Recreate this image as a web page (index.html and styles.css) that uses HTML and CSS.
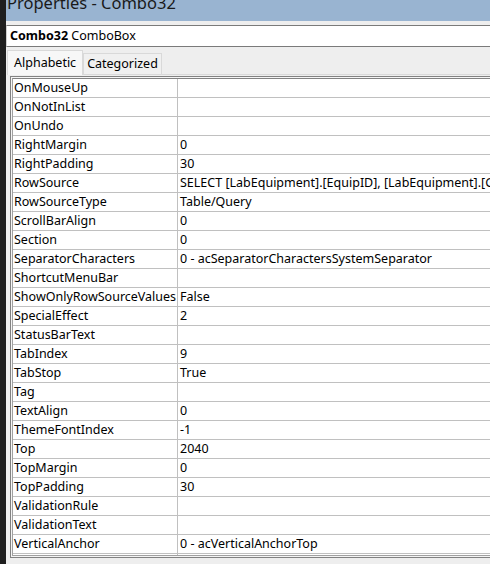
FILE: index.html
```html
<!DOCTYPE html>
<html>
<head>
<meta charset="utf-8">
<link rel="stylesheet" href="styles.css">
</head>
<body>
<div class="desk">
  <div class="strip"></div>
  <div class="win">
    <div class="titlebar"><span class="title">Properties - Combo32</span></div>
    <div class="gap"></div>
    <div class="selector"><b>Combo32</b> ComboBox</div>
    <div class="panel">
      <div class="tabs">
        <div class="tab active">Alphabetic</div>
        <div class="tab">Categorized</div>
      </div>
      <div class="grid">
        <div class="inner">
          <div class="row"><div class="k">OnMouseUp</div><div class="v"></div></div>
          <div class="row"><div class="k">OnNotInList</div><div class="v"></div></div>
          <div class="row"><div class="k">OnUndo</div><div class="v"></div></div>
          <div class="row"><div class="k">RightMargin</div><div class="v">0</div></div>
          <div class="row"><div class="k">RightPadding</div><div class="v">30</div></div>
          <div class="row"><div class="k">RowSource</div><div class="v">SELECT [LabEquipment].[EquipID], [LabEquipment].[GroupID] FROM [LabEquipment];</div></div>
          <div class="row"><div class="k">RowSourceType</div><div class="v">Table/Query</div></div>
          <div class="row"><div class="k">ScrollBarAlign</div><div class="v">0</div></div>
          <div class="row"><div class="k">Section</div><div class="v">0</div></div>
          <div class="row"><div class="k">SeparatorCharacters</div><div class="v">0 - acSeparatorCharactersSystemSeparator</div></div>
          <div class="row"><div class="k">ShortcutMenuBar</div><div class="v"></div></div>
          <div class="row"><div class="k">ShowOnlyRowSourceValues</div><div class="v">False</div></div>
          <div class="row"><div class="k">SpecialEffect</div><div class="v">2</div></div>
          <div class="row"><div class="k">StatusBarText</div><div class="v"></div></div>
          <div class="row"><div class="k">TabIndex</div><div class="v">9</div></div>
          <div class="row"><div class="k">TabStop</div><div class="v">True</div></div>
          <div class="row"><div class="k">Tag</div><div class="v"></div></div>
          <div class="row"><div class="k">TextAlign</div><div class="v">0</div></div>
          <div class="row"><div class="k">ThemeFontIndex</div><div class="v">-1</div></div>
          <div class="row"><div class="k">Top</div><div class="v">2040</div></div>
          <div class="row"><div class="k">TopMargin</div><div class="v">0</div></div>
          <div class="row"><div class="k">TopPadding</div><div class="v">30</div></div>
          <div class="row"><div class="k">ValidationRule</div><div class="v"></div></div>
          <div class="row"><div class="k">ValidationText</div><div class="v"></div></div>
          <div class="row"><div class="k">VerticalAnchor</div><div class="v">0 - acVerticalAnchorTop</div></div>
          <div class="row"><div class="k">Visible</div><div class="v">True</div></div>
        </div>
      </div>
    </div>
  </div>
</div>
</body>
</html>
```
FILE: styles.css
```css
html, body {
  margin: 0;
  padding: 0;
  width: 490px;
  height: 564px;
  overflow: hidden;
  background: #eeeeee;
}
body {
  font-family: "Noto Sans", "Open Sans", sans-serif;
  font-size: 12.5px;
  color: #000;
}
.desk {
  display: flex;
  height: 564px;
}
.strip {
  width: 6px;
  flex: none;
  background: #1e1e1e;
}
.win {
  flex: 1;
  min-width: 0;
  display: flex;
  flex-direction: column;
  background: #eeeeee;
  overflow: hidden;
}
.titlebar {
  height: 21px;
  flex: none;
  background: #99b4d1;
  overflow: hidden;
}
.title {
  display: block;
  font-size: 16.5px;
  line-height: 16px;
  margin-top: -5px;
  padding-left: 1px;
  color: #1a1a1a;
  white-space: nowrap;
}
.gap {
  height: 4px;
  flex: none;
  background: #eeeeee;
}
.selector {
  height: 20px;
  flex: none;
  background: #fff;
  border-top: 1px solid #7a7a7a;
  border-bottom: 1px solid #7a7a7a;
  border-left: 1px solid #cfcfcf;
  padding-left: 3px;
  line-height: 20px;
  white-space: nowrap;
}
.selector b {
  font-weight: bold;
}
.panel {
  flex: 1;
  display: flex;
  flex-direction: column;
  padding: 3px 0 0 1px;
  min-height: 0;
}
.tabs {
  display: flex;
  align-items: flex-end;
  height: 24px;
  border-bottom: 1px solid #d9d9d9;
  flex: none;
}
.tab {
  height: 20px;
  line-height: 20px;
  padding: 0 3px;
  background: #f0f0f0;
  border: 1px solid #d9d9d9;
  border-bottom: none;
  white-space: nowrap;
}
.tab.active {
  height: 24px;
  line-height: 24px;
  padding: 0 6px;
  background: #f7f7f7;
  position: relative;
  top: 1px;
}
.grid {
  margin: 1px 0 0 3px;
  border-top: 1px solid #828282;
  border-left: 1px solid #828282;
  border-bottom: 1px solid #828282;
  padding: 1px 0 1px 1px;
  background: #f4f4f4;
  height: 482px;
  flex: none;
  box-sizing: border-box;
  overflow: hidden;
}
.inner {
  border-top: 1px solid #828282;
  border-left: 1px solid #a0a0a0;
  border-bottom: 1px solid #a0a0a0;
  background: #fff;
  height: 100%;
  box-sizing: border-box;
  overflow: hidden;
}
.row {
  display: flex;
  height: 19px;
  border-bottom: 1px solid #c0c0c0;
  box-sizing: border-box;
  white-space: nowrap;
}
.k {
  width: 163px;
  flex: none;
  padding-left: 1px;
  line-height: 18px;
  border-right: 1px solid #c0c0c0;
  overflow: hidden;
}
.v {
  flex: 1;
  padding-left: 2px;
  line-height: 18px;
  overflow: hidden;
}
```
